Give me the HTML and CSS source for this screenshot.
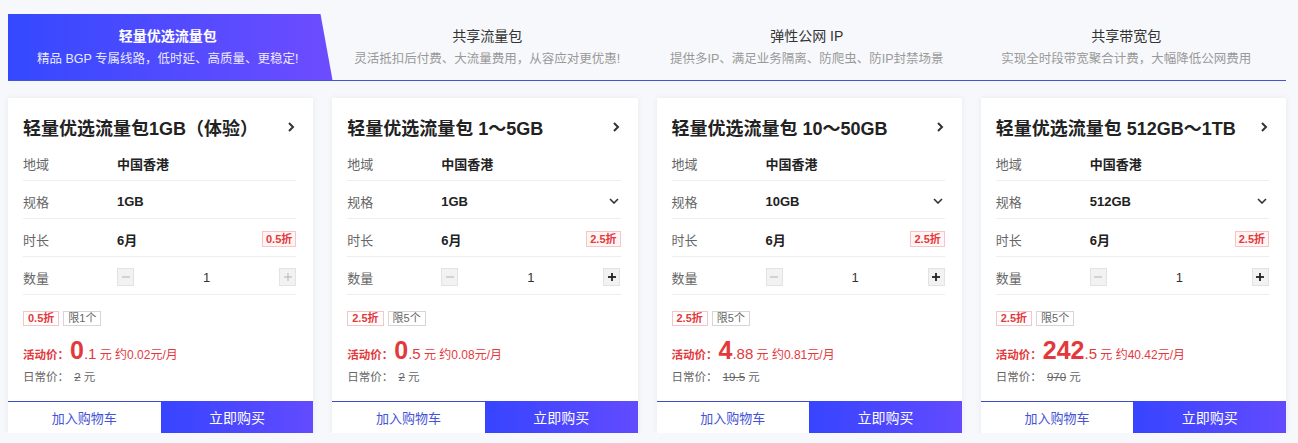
FILE: index.html
```html
<!DOCTYPE html>
<html lang="zh-CN">
  <head>
    <meta charset="UTF-8" />
    <title>流量包</title>
    <link rel="stylesheet" href="styles.css">
  </head>
  <body>
    <div class="page">
      <!-- Product tabs -->
      <div class="tabs">
        <div class="tab active">
          <div class="tab-title">轻量优选流量包</div>
          <div class="tab-desc">精品 BGP 专属线路，低时延、高质量、更稳定!</div>
        </div>
        <div class="tab">
          <div class="tab-title">共享流量包</div>
          <div class="tab-desc">灵活抵扣后付费、大流量费用，从容应对更优惠!</div>
        </div>
        <div class="tab">
          <div class="tab-title">弹性公网 IP</div>
          <div class="tab-desc">提供多IP、满足业务隔离、防爬虫、防IP封禁场景</div>
        </div>
        <div class="tab">
          <div class="tab-title">共享带宽包</div>
          <div class="tab-desc">实现全时段带宽聚合计费，大幅降低公网费用</div>
        </div>
      </div>

      <!-- Package cards -->
      <div class="cards">
        <div class="card">
          <div class="card-head">
            <h3>轻量优选流量包1GB（体验）</h3>
            <svg class="arrow" width="8" height="12" viewBox="0 0 8 12"><polyline points="2,2 6,6 2,10" /></svg>
          </div>
          <div class="row"><span class="label">地域</span><span class="value">中国香港</span></div>
          <div class="row"><span class="label">规格</span><span class="value">1GB</span></div>
          <div class="row"><span class="label">时长</span><span class="value">6月</span><span class="off">0.5折</span></div>
          <div class="row">
            <span class="label">数量</span>
            <div class="counter">
              <span class="step"><svg width="8" height="8" viewBox="0 0 8 8"><line x1="0" y1="4" x2="8" y2="4" /></svg></span>
              <span class="num">1</span>
              <span class="step"><svg width="8" height="8" viewBox="0 0 8 8"><line x1="0" y1="4" x2="8" y2="4" /><line x1="4" y1="0" x2="4" y2="8" /></svg></span>
            </div>
          </div>
          <div class="tags"><span class="tag red">0.5折</span><span class="tag">限1个</span></div>
          <div class="price"><b>活动价：</b><span class="big">0</span><span class="dec">.1</span> 元 <span class="month">约0.02元/月</span></div>
          <div class="normal">日常价： <s>2</s> 元</div>
          <div class="actions"><a class="cart">加入购物车</a><a class="buy">立即购买</a></div>
        </div>

        <div class="card">
          <div class="card-head">
            <h3>轻量优选流量包 1～5GB</h3>
            <svg class="arrow" width="8" height="12" viewBox="0 0 8 12"><polyline points="2,2 6,6 2,10" /></svg>
          </div>
          <div class="row"><span class="label">地域</span><span class="value">中国香港</span></div>
          <div class="row">
            <span class="label">规格</span><span class="value">1GB</span>
            <svg class="down" width="10" height="6" viewBox="0 0 10 6"><polyline points="1,1 5,5 9,1" /></svg>
          </div>
          <div class="row"><span class="label">时长</span><span class="value">6月</span><span class="off">2.5折</span></div>
          <div class="row">
            <span class="label">数量</span>
            <div class="counter">
              <span class="step"><svg width="8" height="8" viewBox="0 0 8 8"><line x1="0" y1="4" x2="8" y2="4" /></svg></span>
              <span class="num">1</span>
              <span class="step on"><svg width="8" height="8" viewBox="0 0 8 8"><line x1="0" y1="4" x2="8" y2="4" /><line x1="4" y1="0" x2="4" y2="8" /></svg></span>
            </div>
          </div>
          <div class="tags"><span class="tag red">2.5折</span><span class="tag">限5个</span></div>
          <div class="price"><b>活动价：</b><span class="big">0</span><span class="dec">.5</span> 元 <span class="month">约0.08元/月</span></div>
          <div class="normal">日常价： <s>2</s> 元</div>
          <div class="actions"><a class="cart">加入购物车</a><a class="buy">立即购买</a></div>
        </div>

        <div class="card">
          <div class="card-head">
            <h3>轻量优选流量包 10～50GB</h3>
            <svg class="arrow" width="8" height="12" viewBox="0 0 8 12"><polyline points="2,2 6,6 2,10" /></svg>
          </div>
          <div class="row"><span class="label">地域</span><span class="value">中国香港</span></div>
          <div class="row">
            <span class="label">规格</span><span class="value">10GB</span>
            <svg class="down" width="10" height="6" viewBox="0 0 10 6"><polyline points="1,1 5,5 9,1" /></svg>
          </div>
          <div class="row"><span class="label">时长</span><span class="value">6月</span><span class="off">2.5折</span></div>
          <div class="row">
            <span class="label">数量</span>
            <div class="counter">
              <span class="step"><svg width="8" height="8" viewBox="0 0 8 8"><line x1="0" y1="4" x2="8" y2="4" /></svg></span>
              <span class="num">1</span>
              <span class="step on"><svg width="8" height="8" viewBox="0 0 8 8"><line x1="0" y1="4" x2="8" y2="4" /><line x1="4" y1="0" x2="4" y2="8" /></svg></span>
            </div>
          </div>
          <div class="tags"><span class="tag red">2.5折</span><span class="tag">限5个</span></div>
          <div class="price"><b>活动价：</b><span class="big">4</span><span class="dec">.88</span> 元 <span class="month">约0.81元/月</span></div>
          <div class="normal">日常价： <s>19.5</s> 元</div>
          <div class="actions"><a class="cart">加入购物车</a><a class="buy">立即购买</a></div>
        </div>

        <div class="card">
          <div class="card-head">
            <h3>轻量优选流量包 512GB～1TB</h3>
            <svg class="arrow" width="8" height="12" viewBox="0 0 8 12"><polyline points="2,2 6,6 2,10" /></svg>
          </div>
          <div class="row"><span class="label">地域</span><span class="value">中国香港</span></div>
          <div class="row">
            <span class="label">规格</span><span class="value">512GB</span>
            <svg class="down" width="10" height="6" viewBox="0 0 10 6"><polyline points="1,1 5,5 9,1" /></svg>
          </div>
          <div class="row"><span class="label">时长</span><span class="value">6月</span><span class="off">2.5折</span></div>
          <div class="row">
            <span class="label">数量</span>
            <div class="counter">
              <span class="step"><svg width="8" height="8" viewBox="0 0 8 8"><line x1="0" y1="4" x2="8" y2="4" /></svg></span>
              <span class="num">1</span>
              <span class="step on"><svg width="8" height="8" viewBox="0 0 8 8"><line x1="0" y1="4" x2="8" y2="4" /><line x1="4" y1="0" x2="4" y2="8" /></svg></span>
            </div>
          </div>
          <div class="tags"><span class="tag red">2.5折</span><span class="tag">限5个</span></div>
          <div class="price"><b>活动价：</b><span class="big">242</span><span class="dec">.5</span> 元 <span class="month">约40.42元/月</span></div>
          <div class="normal">日常价： <s>970</s> 元</div>
          <div class="actions"><a class="cart">加入购物车</a><a class="buy">立即购买</a></div>
        </div>
      </div>
    </div>
  </body>
</html>
```

FILE: styles.css
```css
/* Base */
body {
  margin: 0;
  background-color: #f7f8fb;
  font-family: "Liberation Sans", "Noto Sans CJK SC", sans-serif;
  color: #333;
}

.page {
  width: 1278px;
  padding: 14px 0 0 8px;
}

/* Tabs */
.tabs {
  display: grid;
  grid-template-columns: repeat(4, 1fr);
  height: 66px;
  border-bottom: 1px solid #4654d4;
}

.tab {
  position: relative;
  display: flex;
  flex-direction: column;
  align-items: center;
  justify-content: center;
  gap: 3px;
  padding-bottom: 2px;
}

.tab.active::before {
  content: "";
  position: absolute;
  top: 0;
  bottom: 0;
  left: 0;
  right: -5px;
  background: linear-gradient(90deg, #3449ff, #6e4cff);
  clip-path: polygon(0 0, calc(100% - 12px) 0, 100% 100%, 0 100%);
}

.tab-title,
.tab-desc {
  position: relative;
  white-space: nowrap;
}

.tab-title {
  font-size: 14px;
  color: #333;
}

.tab-desc {
  font-size: 12.5px;
  color: #999;
}

.tab.active .tab-title {
  color: #fff;
  font-weight: bold;
}

.tab.active .tab-desc {
  color: rgba(255, 255, 255, 0.9);
}

/* Cards */
.cards {
  display: grid;
  grid-template-columns: repeat(4, 1fr);
  gap: 19px;
  margin-top: 17px;
}

.card {
  background-color: #fff;
  box-shadow: 0 0 6px rgba(30, 40, 90, 0.07);
  padding: 0 17px 0 15px;
  display: flex;
  flex-direction: column;
}

.card-head {
  display: flex;
  align-items: center;
  justify-content: space-between;
  margin: 18px 0 5px;
  height: 22px;
}

.card-head h3 {
  margin: 0;
  font-size: 18px;
  font-weight: bold;
  color: #222;
  white-space: nowrap;
}

.arrow polyline,
.down polyline {
  fill: none;
  stroke: #333;
  stroke-width: 2;
}

.arrow {
  margin-right: 1px;
}

.down polyline {
  stroke-width: 1.6;
}

.row {
  display: flex;
  align-items: center;
  height: 38px;
  box-sizing: border-box;
  padding-top: 3px;
  border-bottom: 1px solid #eee;
  font-size: 13px;
}

.label {
  width: 94px;
  color: #666;
}

.value {
  flex: 1;
  font-weight: bold;
  color: #222;
}

.down {
  margin-right: 2px;
}

.off {
  font-size: 11px;
  font-weight: bold;
  color: #e4393c;
  background-color: #fff5f5;
  border: 1px solid #f6c6c6;
  padding: 0 3px;
  line-height: 14px;
}

/* Quantity counter */
.counter {
  flex: 1;
  display: flex;
  align-items: center;
  justify-content: space-between;
}

.step {
  width: 15px;
  height: 16px;
  display: flex;
  align-items: center;
  justify-content: center;
  background-color: #f2f2f2;
  border: 1px solid #e3e3e3;
}

.step line {
  stroke: #b5b5b5;
  stroke-width: 1;
}

.step.on line {
  stroke: #222;
  stroke-width: 1.8;
}

.num {
  font-size: 13px;
  color: #333;
}

/* Tags and price */
.tags {
  display: flex;
  gap: 4px;
  margin-top: 16px;
}

.tag {
  font-size: 11px;
  line-height: 13px;
  padding: 0 4px;
  border: 1px solid #d6d6d6;
  color: #666;
}

.tag.red {
  color: #e4393c;
  font-weight: bold;
  border-color: #f6c6c6;
}

.price {
  margin-top: 12px;
  font-size: 12px;
  color: #e4393c;
  line-height: 24px;
}

.price b {
  font-size: 11.5px;
}

.price .big {
  font-size: 25px;
  font-weight: bold;
  margin-left: 1px;
}

.price .dec {
  font-size: 15px;
}

.price .month {
  font-size: 12px;
}

.normal {
  margin: 1px 0 17px;
  font-size: 11.5px;
  color: #666;
}

.normal s {
  margin-left: 2px;
}

/* Bottom buttons */
.actions {
  display: grid;
  grid-template-columns: 1fr 1fr;
  margin: auto -17px 0 -15px;
  height: 32px;
}

.actions a {
  display: flex;
  align-items: center;
  justify-content: center;
  cursor: pointer;
}

.cart {
  font-size: 13px;
  color: #4553d6;
  border-top: 1px solid #3f4dcc;
  background-color: #fff;
}

.buy {
  font-size: 14px;
  color: #fff;
  background: linear-gradient(90deg, #3744ff, #624bff);
}
```
